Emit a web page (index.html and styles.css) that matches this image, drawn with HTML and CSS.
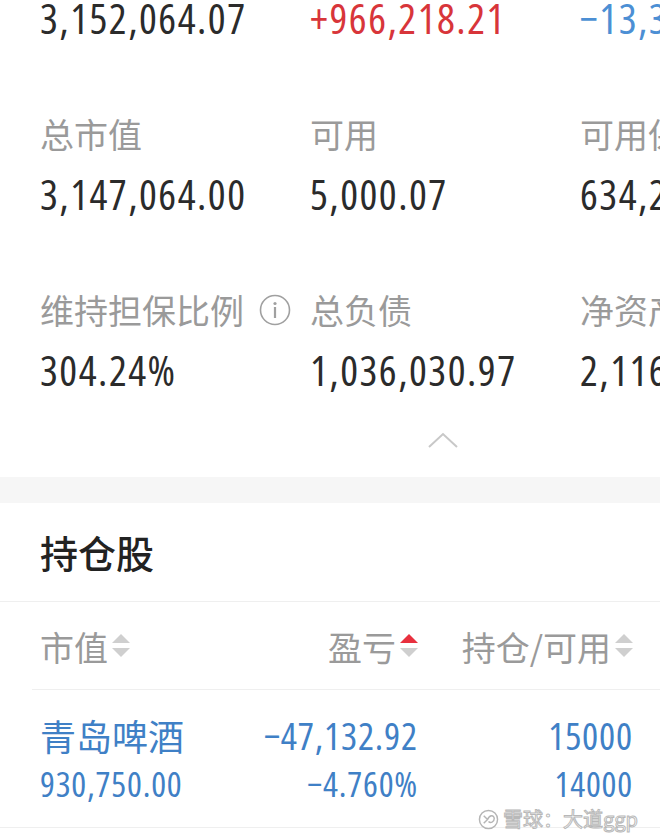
FILE: index.html
```html
<!DOCTYPE html>
<html lang="zh-CN">
<head>
    <meta charset="UTF-8">
    <meta name="viewport" content="width=device-width, initial-scale=1.0">
    <title>持仓</title>
    <link rel="stylesheet" href="styles.css">
</head>
<body>

<div class="summary">
    <div class="cell">
        <div class="label">总资产</div>
        <div class="value">3,152,064.07</div>
    </div>
    <div class="cell">
        <div class="label">浮动盈亏</div>
        <div class="value up">+966,218.21</div>
    </div>
    <div class="cell">
        <div class="label">当日参考盈亏</div>
        <div class="value down">−13,350.00</div>
    </div>

    <div class="cell">
        <div class="label">总市值</div>
        <div class="value">3,147,064.00</div>
    </div>
    <div class="cell">
        <div class="label">可用</div>
        <div class="value">5,000.07</div>
    </div>
    <div class="cell">
        <div class="label">可用保证金</div>
        <div class="value">634,238.55</div>
    </div>

    <div class="cell">
        <div class="label">维持担保比例
            <svg class="info" width="32" height="32" viewBox="0 0 32 32">
                <circle cx="16" cy="16" r="14.5" fill="none" stroke="#a0a0a0" stroke-width="1.6"/>
                <circle cx="16" cy="9.5" r="1.6" fill="#a0a0a0"/>
                <rect x="14.9" y="13" width="2.2" height="11" fill="#a0a0a0"/>
            </svg>
        </div>
        <div class="value">304.24%</div>
    </div>
    <div class="cell">
        <div class="label">总负债</div>
        <div class="value">1,036,030.97</div>
    </div>
    <div class="cell">
        <div class="label">净资产</div>
        <div class="value">2,116,033.10</div>
    </div>
</div>

<div class="collapse">
    <svg width="32" height="16" viewBox="0 0 32 16">
        <polyline points="2,15 16,2 30,15" fill="none" stroke="#c8c8c8" stroke-width="2"/>
    </svg>
</div>

<div class="gap"></div>

<div class="section-title">持仓股</div>

<div class="table-head">
    <div class="col">市值
        <svg class="sort" width="18" height="24" viewBox="0 0 18 24">
            <polygon points="9,0 18,9 0,9" fill="#cfcfcf"/>
            <polygon points="0,14 18,14 9,23" fill="#cfcfcf"/>
        </svg>
    </div>
    <div class="col right">盈亏
        <svg class="sort" width="18" height="24" viewBox="0 0 18 24">
            <polygon points="9,0 18,9 0,9" fill="#e8303e"/>
            <polygon points="0,14 18,14 9,23" fill="#cfcfcf"/>
        </svg>
    </div>
    <div class="col right">持仓/可用
        <svg class="sort" width="18" height="24" viewBox="0 0 18 24">
            <polygon points="9,0 18,9 0,9" fill="#cfcfcf"/>
            <polygon points="0,14 18,14 9,23" fill="#cfcfcf"/>
        </svg>
    </div>
</div>

<div class="stock-row">
    <div class="col">
        <div class="name">青岛啤酒</div>
        <div class="num">930,750.00</div>
    </div>
    <div class="col right">
        <div class="num big">−47,132.92</div>
        <div class="num">−4.760%</div>
    </div>
    <div class="col right">
        <div class="num big">15000</div>
        <div class="num">14000</div>
    </div>
</div>

<div class="watermark">
    <svg width="21" height="21" viewBox="0 0 22 22">
        <circle cx="11" cy="11" r="9.5" fill="#fff" stroke="#b5b5b5" stroke-width="1.5"/>
        <path d="M6 7 L10 11 L6 15 M10 11 C12 6 17 6 17 10 C17 14 13 15 11 13" fill="none" stroke="#b5b5b5" stroke-width="1.5"/>
    </svg>
    <span>雪球：大道ggp</span>
</div>

</body>
</html>
```

FILE: styles.css
```css
body {
    font-family: "Noto Sans CJK SC", "Noto Sans", sans-serif;
    margin: 0;
    padding: 0;
    width: 660px;
    height: 839px;
    overflow: hidden;
    background-color: #fff;
    position: relative;
}

.summary {
    display: grid;
    grid-template-columns: 270px 270px 270px;
    row-gap: 56px;
    padding-left: 40px;
    margin-top: -70px;
    width: 900px;
}

.label {
    height: 56px;
    line-height: 56px;
    font-size: 34px;
    color: #9a9a9a;
    white-space: nowrap;
    display: flex;
    align-items: center;
}

.info {
    margin-left: 15px;
}

.value {
    height: 64px;
    line-height: 64px;
    font-family: "Open Sans", sans-serif;
    font-stretch: 75%;
    font-weight: 500;
    font-size: 42px;
    letter-spacing: 1.5px;
    color: #2b2b2b;
    white-space: nowrap;
}

.value.up {
    color: #d8353a;
}

.value.down {
    color: #4c8fd4;
}

.collapse {
    height: 75px;
    display: flex;
    justify-content: center;
    align-items: center;
    padding-left: 226px;
    box-sizing: border-box;
}

.gap {
    height: 26px;
    background-color: #f6f6f6;
}

.section-title {
    height: 98px;
    line-height: 98px;
    padding-left: 40px;
    font-size: 38px;
    color: #222;
    font-weight: 500;
    border-bottom: 1px solid #efefef;
}

.table-head,
.stock-row {
    display: grid;
    grid-template-columns: 1fr 150px 215px;
    padding: 0 27px 0 40px;
}

.table-head {
    height: 88px;
    align-items: center;
    font-size: 34px;
    color: #9a9a9a;
    position: relative;
}

.table-head::after {
    content: '';
    position: absolute;
    left: 32px;
    right: 0;
    bottom: 0;
    height: 1px;
    background-color: #efefef;
}

.col {
    display: flex;
    align-items: center;
    white-space: nowrap;
}

.table-head .col.right {
    justify-content: flex-end;
}

.sort {
    margin-left: 4px;
}

.stock-row {
    padding-top: 17px;
    padding-bottom: 22px;
    border-bottom: 1px solid #efefef;
    color: #3f80c6;
}

.stock-row .col {
    flex-direction: column;
    align-items: flex-start;
}

.stock-row .col.right {
    align-items: flex-end;
}

.name {
    height: 56px;
    line-height: 56px;
    font-size: 36px;
}

.num {
    height: 42px;
    line-height: 42px;
    font-family: "Open Sans", sans-serif;
    font-stretch: 78%;
    font-size: 35px;
    letter-spacing: 0.8px;
}

.num.big {
    height: 56px;
    line-height: 56px;
    font-size: 38px;
}

.watermark {
    position: absolute;
    right: 22px;
    top: 808px;
    height: 22px;
    display: flex;
    align-items: center;
    gap: 4px;
    font-size: 20px;
    line-height: 22px;
    color: #fff;
    -webkit-text-stroke: 1px #b8b8b8;
}
```
